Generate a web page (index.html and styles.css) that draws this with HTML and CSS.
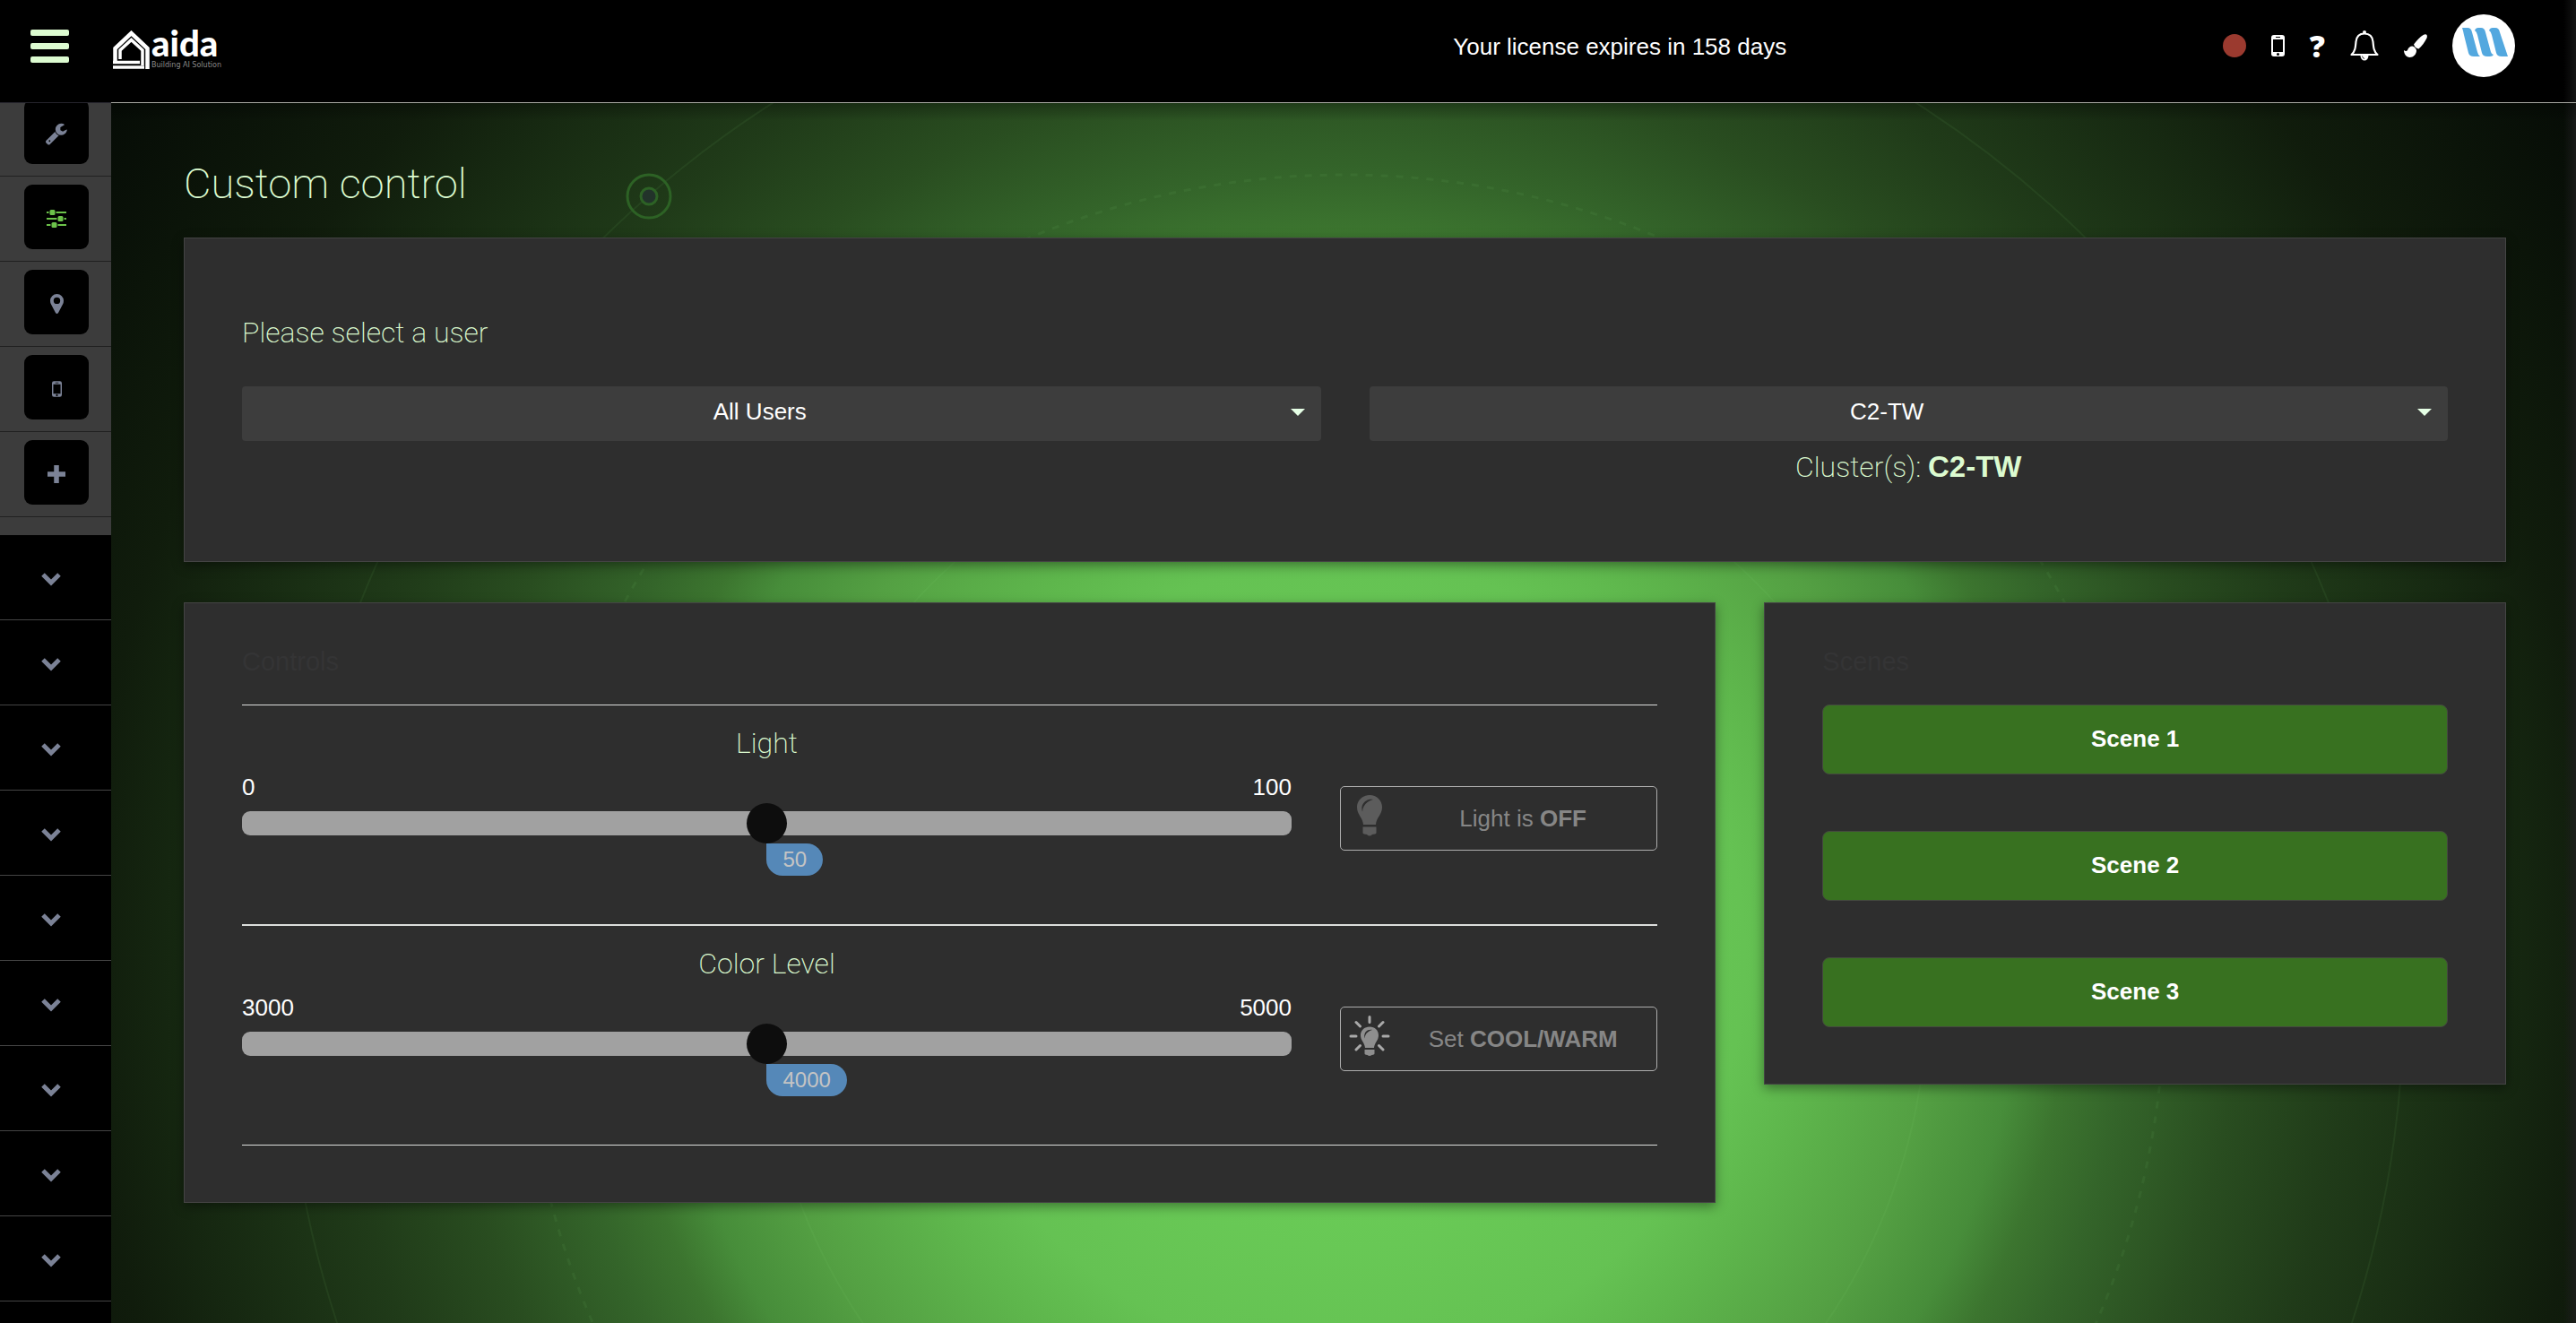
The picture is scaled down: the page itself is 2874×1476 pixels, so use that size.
FILE: index.html
```html
<!DOCTYPE html>
<html lang="en">
<head>
<meta charset="utf-8">
<title>Custom control</title>
<link rel="stylesheet" href="styles.css">
</head>
<body>
<svg class="sprite" aria-hidden="true">
  <symbol id="chevron" viewBox="0 0 24 16"><path d="M3 3l9 9 9-9" fill="none" stroke="currentColor" stroke-width="5"/></symbol>
  <symbol id="phone" viewBox="0 0 15 24"><path fill="currentColor" fill-rule="evenodd" d="M3 0h9a3 3 0 0 1 3 3v18a3 3 0 0 1-3 3H3a3 3 0 0 1-3-3V3a3 3 0 0 1 3-3zM2 5v14h11V5zM5 2v1h5V2zM7.500 20a1.500 1.500 0 1 0 0 3 1.500 1.500 0 0 0 0-3z"/></symbol>
</svg>

<header class="topbar">
  <div class="brand">
    <button class="menu" aria-label="Menu"><span></span><span></span><span></span></button>
    <a class="logo" href="#" aria-label="aida home">
      <svg viewBox="0 0 41 43" width="41" height="43" fill="none" stroke="#fff" aria-hidden="true">
        <path d="M2.500 34V20L20.500 3 38.500 20v23" stroke-width="4.500"/>
        <path d="M8 32V22L20.500 10.500 33 22v17" stroke-width="3.500"/>
        <path d="M0 41h35M0 35.500h30" stroke-width="3.500"/>
      </svg>
      <span class="logo-text"><span class="logo-name">aida</span><span class="logo-tag">Building AI Solution</span></span>
    </a>
  </div>
  <p class="license">Your license expires in 158 days</p>
  <nav class="tools" aria-label="Tools">
    <span class="status"></span>
    <a href="#" aria-label="Phone"><svg width="15" height="24"><use href="#phone"/></svg></a>
    <a class="help" href="#">?</a>
    <a href="#" aria-label="Notifications">
      <svg width="32" height="34" viewBox="0 0 32 34" aria-hidden="true">
        <path d="M16 3.500c-6 0-9 4-9.500 9-.6 7-1 11-5 14.500h29c-4-3.500-4.400-7.500-5-14.500-.5-5-3.500-9-9.500-9z" fill="none" stroke="currentColor" stroke-width="2.200" stroke-linejoin="round"/>
        <circle cx="16" cy="2" r="2" fill="currentColor"/>
        <path d="M11.500 28a4.500 5.500 0 0 0 9 0z" fill="currentColor"/>
        <path d="M13.500 28.500q.3 2.500 2.500 3" stroke="#000" stroke-width=".8" fill="none"/>
      </svg>
    </a>
    <a href="#" aria-label="Theme">
      <svg width="26" height="26" viewBox="0 0 26 26" fill="currentColor" aria-hidden="true">
        <path d="M25 .5q1.500 1 .5 4C23 9.500 20 13.500 16.500 16.500q-4-.5-5.500-5C14 7.500 18 3 22 .7q2-.9 3-.2z"/>
        <path d="M9.500 13.500q2 0 3.500 2.500 1 1 1 2.500c0 4-3.500 7.500-7.500 7.500C2.500 26 0 22 0 18q2.500 2 4 0 1.500-4.500 5.500-4.500z"/>
      </svg>
    </a>
    <a class="avatar" href="#" aria-label="Account">
      <svg width="70" height="70" viewBox="0 0 70 70" aria-hidden="true">
        <g fill="#53a8df">
          <path d="M11 15h6q4 0 5 5l6 22q1 4 3 5h-7q-5 0-6-4l-5-20q-1-5-2-8z"/>
          <path d="M25 18q1-3 4-3h3q4 0 5 5l6 22q1 3 3 3-1 2-4 2h-3q-5 0-6-4l-5-20q-1-4-3-5z"/>
          <path d="M41 18q1-3 4-3h3q4 0 5 5l9 27h-7q-5 0-6-4l-5-20q-1-4-3-5z"/>
        </g>
      </svg>
    </a>
  </nav>
</header>

<div class="layout">
  <nav class="sidebar" aria-label="Main">
    <div class="side-list">
      <div class="side-group">
        <div class="side-item"><a class="tile" href="#" aria-label="Settings"><svg width="26" height="26" viewBox="0 0 1700 1800" aria-hidden="true"><path fill="currentColor" d="M384 1472q0-26-19-45t-45-19-45 19-19 45 19 45 45 19 45-19 19-45zm644-420l-682 682q-37 37-90 37-52 0-91-37l-106-108q-38-36-38-90 0-53 38-91l681-681q39 98 114.500 173.500t173.500 114.500zm634-435q0 39-23 106-47 134-164.500 217.500t-258.500 83.500q-185 0-316.500-131.500t-131.500-316.500 131.500-316.500 316.500-131.500q58 0 121.500 16.500t107.500 46.500q16 11 16 28t-16 28l-293 169v224l193 107q5-3 79-48.500t135.500-81 70.500-35.500q15 0 23.500 10t8.500 25z"/></svg></a></div>
        <div class="side-item"><a class="tile active" href="#" aria-label="Custom control"><svg width="22" height="20" viewBox="0 0 22 20" fill="currentColor" aria-hidden="true"><path d="M0 2h22v2H0zM0 9h22v2H0zM0 16h22v2H0z"/><path d="M2.500 0h8v6h-8zM11.500 7h8v6h-8zM4.500 14h8v6h-8z" fill="#000"/><rect x="3.500" width="6" height="6" rx="1.500"/><rect x="12.500" y="7" width="6" height="6" rx="1.500"/><rect x="5.500" y="14" width="6" height="6" rx="1.500"/></svg></a></div>
        <div class="side-item"><a class="tile" href="#" aria-label="Locations"><svg width="15" height="22" viewBox="0 0 15 22" aria-hidden="true"><path fill="currentColor" fill-rule="evenodd" d="M7.500 0A7.500 7.500 0 0 1 15 7.500q0 2-1 4L9 21q-1.500 2-3 0L1 11.500q-1-2-1-4A7.500 7.500 0 0 1 7.500 0zm0 3.700a3.700 3.700 0 1 0 0 7.400 3.700 3.700 0 0 0 0-7.400z"/></svg></a></div>
        <div class="side-item"><a class="tile" href="#" aria-label="Devices"><svg width="11" height="18"><use href="#phone"/></svg></a></div>
        <div class="side-item"><a class="tile" href="#" aria-label="Add"><svg width="20" height="20" viewBox="0 0 20 20" aria-hidden="true"><path d="M10 2.500v15M2.500 10h15" stroke="currentColor" stroke-width="5.500" stroke-linecap="square"/></svg></a></div>
      </div>
      <button class="side-toggle" aria-label="Expand section 1"><svg width="24" height="16"><use href="#chevron"/></svg></button>
      <button class="side-toggle" aria-label="Expand section 2"><svg width="24" height="16"><use href="#chevron"/></svg></button>
      <button class="side-toggle" aria-label="Expand section 3"><svg width="24" height="16"><use href="#chevron"/></svg></button>
      <button class="side-toggle" aria-label="Expand section 4"><svg width="24" height="16"><use href="#chevron"/></svg></button>
      <button class="side-toggle" aria-label="Expand section 5"><svg width="24" height="16"><use href="#chevron"/></svg></button>
      <button class="side-toggle" aria-label="Expand section 6"><svg width="24" height="16"><use href="#chevron"/></svg></button>
      <button class="side-toggle" aria-label="Expand section 7"><svg width="24" height="16"><use href="#chevron"/></svg></button>
      <button class="side-toggle" aria-label="Expand section 8"><svg width="24" height="16"><use href="#chevron"/></svg></button>
      <button class="side-toggle" aria-label="Expand section 9"><svg width="24" height="16"><use href="#chevron"/></svg></button>
      <button class="side-toggle" aria-label="Expand section 10"><svg width="24" height="16"><use href="#chevron"/></svg></button>
    </div>
  </nav>

  <main class="page">
    <svg class="orbits" viewBox="0 0 2750 1361" preserveAspectRatio="xMidYMin slice" fill="none" stroke="#8fe07a" aria-hidden="true">
      <g stroke-width="2" stroke-opacity=".07">
        <circle cx="1376" cy="995" r="650"/>
        <circle cx="1376" cy="995" r="915" stroke-width="3" stroke-dasharray="8 9"/>
        <circle cx="1376" cy="995" r="1182"/>
      </g>
      <g stroke="#2d6225" stroke-width="3">
        <circle cx="600" cy="104" r="24"/>
        <circle cx="600" cy="104" r="9" fill="#22332a"/>
      </g>
    </svg>
    <div class="content">
      <h1>Custom control</h1>

      <section class="card picker">
        <h2 id="pick">Please select a user</h2>
        <div class="picker-grid">
          <div class="select"><select aria-labelledby="pick"><option>All Users</option></select></div>
          <div class="select"><select aria-label="Cluster"><option>C2-TW</option></select></div>
          <p class="cluster">Cluster(s): <b>C2-TW</b></p>
        </div>
      </section>

      <div class="columns">
        <section class="card controls">
          <h3>Controls</h3>
          <div class="control">
            <div class="slider">
              <h2><label for="light">Light</label></h2>
              <div class="limits"><span>0</span><span>100</span></div>
              <input id="light" type="range" min="0" max="100" value="50">
              <output class="value" for="light" style="margin-left:50%">50</output>
            </div>
            <button class="action">
              <svg width="64" height="46" viewBox="0 0 64 46" fill="#5c5c5c" aria-hidden="true">
                <path fill-rule="evenodd" d="M32 0c8 0 14 6 14 13.500C46 22 39.500 25 39 33H25c-.5-8-7-11-7-19.500C18 6 24 0 32 0zm4 5c-9-1.500-14.500 6-12 13.500C24.500 11 29 7 36 5z"/>
                <path d="M24.500 35.500h15v6.500q0 1-1.500 1.500l-3 .5q-3 3-6 0l-3-.5q-1.500-.5-1.500-1.500z"/>
              </svg>
              <span>Light is <b>OFF</b></span>
            </button>
          </div>
          <div class="control strong">
            <div class="slider">
              <h2><label for="color">Color Level</label></h2>
              <div class="limits"><span>3000</span><span>5000</span></div>
              <input id="color" type="range" min="3000" max="5000" value="4000">
              <output class="value" for="color" style="margin-left:50%">4000</output>
            </div>
            <button class="action">
              <svg width="64" height="46" viewBox="0 0 64 46" fill="#8e8e8e" aria-hidden="true">
                <path fill-rule="evenodd" d="M32 12.500c6 0 10 4 10 9.500 0 6-4.500 8-5 14H27c-.5-6-5-8-5-14 0-5.500 4-9.500 10-9.500zm3 3.500c-6.500-1-10 4-8.500 9.500.5-5 3.500-8 8.500-9.500z"/>
                <path d="M26.500 38h11v4.500q0 1-1.500 1.300l-1.500.2q-2.500 2-5 0l-1.500-.2q-1.500-.3-1.500-1.300z"/>
                <path d="M32 1.500v6M11 23h6M47 23h6M17 7.500l4.500 4.500M47 7.500L42.500 12M17 38l4.500-4.500M47 38l-4.500-4.500" stroke="#a9a9a9" stroke-width="3" stroke-linecap="round"/>
              </svg>
              <span>Set <b>COOL/WARM</b></span>
            </button>
          </div>
        </section>

        <section class="card scenes">
          <h3>Scenes</h3>
          <div class="scene-list">
            <button>Scene 1</button>
            <button>Scene 2</button>
            <button>Scene 3</button>
          </div>
        </section>
      </div>
    </div>
  </main>
</div>
</body>
</html>
```
FILE: styles.css
```css
* { box-sizing: border-box; }

body {
  margin: 0;
  height: 100vh;
  display: flex;
  flex-direction: column;
  overflow: hidden;
  background: #000;
  color: #fff;
  font: 26px/30px "Liberation Sans", Arial, sans-serif;
}

h1, h2, h3, p { margin: 0; }
button, select, input { font: inherit; color: inherit; margin: 0; }
button { cursor: pointer; }
a { color: inherit; text-decoration: none; }
svg { display: block; flex: none; }
.sprite { position: absolute; width: 0; height: 0; }

/* top bar */
.topbar {
  flex: none;
  height: 114px;
  padding: 0 68px 12px 34px;
  display: flex;
  align-items: center;
  background: linear-gradient(to left, #141414, #000 14px);
}
.brand { flex: 9; display: flex; align-items: center; gap: 49px; }
.license { flex: 11; text-align: center; padding-top: 2px; }
.tools { display: flex; align-items: center; gap: 28px; }
.menu {
  width: 43px;
  padding: 0;
  border: 0;
  background: none;
  display: grid;
  gap: 8px;
}
.menu span { height: 7px; border-radius: 2px; background: #dcfbd0; }
.logo { display: flex; align-items: flex-end; gap: 2px; padding-top: 6px; }
.logo-text { display: grid; gap: 3px; }
.logo-name { font: 900 40px/34px Lato, sans-serif; }
.logo-tag { font: 8px/9px "DejaVu Sans", sans-serif; color: #8a8a8a; }
.status { width: 26px; height: 26px; border-radius: 50%; background: #9b3a2f; }
.help { font: 800 34px/36px "Open Sans", sans-serif; }
.avatar { border-radius: 50%; background: #fff; }

/* frame */
.layout { flex: 1; min-height: 0; display: flex; }
.sidebar {
  flex: none;
  width: 124px;
  overflow: hidden;
  border-top: 1px solid #25242c;
  color: #7b8296;
}
.side-list { margin-top: -13px; }
.side-group { padding-bottom: 20px; background: #3c3c3c; }
.side-item {
  height: 95px;
  padding: 9px 0 0 27px;
  border-bottom: 1px solid #202020;
}
.tile {
  width: 72px;
  height: 72px;
  padding-top: 4px;
  display: flex;
  align-items: center;
  justify-content: center;
  border-radius: 9px;
  background: #000;
}
.tile.active { color: #6cc24a; }
.side-toggle {
  width: 100%;
  height: 95px;
  padding: 4px 10px 0 0;
  display: flex;
  align-items: center;
  justify-content: center;
  border: 0;
  border-bottom: 1px solid #444;
  background: #000;
}

.page {
  flex: 1;
  position: relative;
  overflow: hidden;
  border-top: 1px solid #a8a8a2;
  background:
    linear-gradient(to bottom, rgba(0, 0, 0, .3), transparent 20px),
    linear-gradient(to left, rgba(30, 30, 30, .8), transparent 14px),
    radial-gradient(circle at 50% 955px,
      #6acb57 0, #69ca56 280px, #65c253 448px, #5eb64c 530px, #54a043 660px,
      #478d3a 754px, #3c752f 810px, #34652a 876px, #294d20 1000px,
      #203b19 1125px, #162811 1300px, #101c0c 1403px, #060c06 1672px);
}
.orbits { position: absolute; inset: 0; width: 100%; height: 100%; }
.content { position: relative; padding: 61px 78px 60px 81px; }

h1, h2, .cluster { font-family: Roboto, Inter, sans-serif; font-weight: 200; color: #dcfbd0; }
h1 { font-size: 47px; line-height: 58px; margin-bottom: 31px; }
h2, .cluster { font-size: 32px; line-height: 40px; }
h3 { font-size: 29px; font-weight: 400; line-height: 32px; margin-bottom: 32px; color: #343435; }

.card {
  border: 1px solid #444;
  background: #2e2e2e;
  box-shadow: 0 4px 12px rgba(0, 0, 0, .4);
  padding: 49px 64px 63px;
}

/* picker */
.picker { padding: 85px 64px; }
.picker-grid {
  margin-top: 40px;
  display: grid;
  grid-template-columns: 1fr 1fr;
  gap: 9px 54px;
}
.select { position: relative; }
.select::after {
  content: "";
  position: absolute;
  right: 18px;
  top: 25px;
  border: 8px solid transparent;
  border-top-color: #e6ffe6;
  border-bottom: 0;
  pointer-events: none;
}
.select select {
  appearance: none;
  width: 100%;
  height: 61px;
  padding: 0 56px 5px 8px;
  border: 0;
  border-radius: 4px;
  background: #3d3d3d;
  text-align-last: center;
}
.cluster { grid-column: 2; text-align: center; }
.cluster b { font: bold 33px/40px "Liberation Sans", Arial, sans-serif; }

/* controls and scenes */
.columns {
  margin-top: 45px;
  display: grid;
  grid-template-columns: repeat(3, 1fr);
  gap: 54px;
  align-items: start;
}
.controls { grid-column: span 2; }
.control {
  padding: 22px 0 54px;
  border-top: 1px solid #dcdedc;
  display: grid;
  grid-template-columns: repeat(4, 1fr);
  gap: 54px;
  align-items: start;
}
.control.strong { border-top-width: 2px; border-bottom: 1px solid #dcdedc; }
.slider { grid-column: span 3; display: flex; flex-direction: column; align-items: flex-start; }
.slider h2 { align-self: center; }
.limits { width: 100%; margin: 14px 0 3px; display: flex; justify-content: space-between; }
.slider input {
  appearance: none;
  width: 100%;
  height: 45px;
  background: none;
}
.slider input::-webkit-slider-runnable-track { height: 27px; border-radius: 9px; background: #a1a1a1; }
.slider input::-webkit-slider-thumb {
  appearance: none;
  width: 45px;
  height: 45px;
  margin-top: -9px;
  border-radius: 50%;
  background: #0d0d0d;
}
.value {
  padding: 0 18px;
  border-radius: 0 18px 18px 18px;
  background: #5588b8;
  color: #c4c4c4;
  font-size: 24px;
  line-height: 36px;
}
.action {
  height: 72px;
  margin-top: 68px;
  padding: 0 10px 0 0;
  display: flex;
  align-items: center;
  border: 1px solid #adadad;
  border-radius: 5px;
  background: none;
  color: #868686;
}
.action svg { margin-bottom: 6px; }
.action span { flex: 1; text-align: center; }
.scene-list { display: grid; gap: 63px; }
.scene-list button {
  height: 78px;
  padding: 0 0 2px;
  border: 1px solid #44493f;
  border-radius: 8px;
  background: #387120;
  font-weight: bold;
}
```
